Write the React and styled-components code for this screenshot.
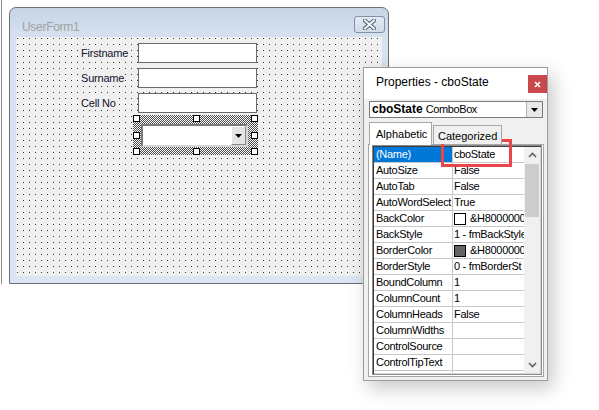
import React from "react";
import styled, { createGlobalStyle } from "styled-components";

const GlobalStyle = createGlobalStyle`
  html, body {
    margin: 0;
    padding: 0;
    background: #fff;
  }
  body {
    font-family: "Liberation Sans", Tahoma, Arial, sans-serif;
  }
`;

const fields = ["Firstname", "Surname", "Cell No"];

const properties = [
  { name: "(Name)", value: "cboState", selected: true },
  { name: "AutoSize", value: "False" },
  { name: "AutoTab", value: "False" },
  { name: "AutoWordSelect", value: "True" },
  { name: "BackColor", value: "&H8000000", swatch: "#ffffff" },
  { name: "BackStyle", value: "1 - fmBackStyle" },
  { name: "BorderColor", value: "&H8000000", swatch: "#646464" },
  { name: "BorderStyle", value: "0 - fmBorderSt" },
  { name: "BoundColumn", value: "1" },
  { name: "ColumnCount", value: "1" },
  { name: "ColumnHeads", value: "False" },
  { name: "ColumnWidths", value: "" },
  { name: "ControlSource", value: "" },
  { name: "ControlTipText", value: "" },
  { name: "", value: "" },
];

const handles = [
  [0, 0], [60, 0], [118, 0],
  [0, 17], [118, 17],
  [0, 33], [60, 33], [118, 33],
];

const App = () => {
  return (
    <>
      <GlobalStyle />
      <Desktop>
        <EdgeLine />

        <FormWindow>
          <FormTitleBar>
            <FormTitle>UserForm1</FormTitle>
            <FormClose>
              <svg width="13" height="11" viewBox="0 0 13 11">
                <path d="M2 1.5 L11 9.5 M11 1.5 L2 9.5" stroke="#55606c" strokeWidth="4" strokeLinecap="square" />
                <path d="M2 1.5 L11 9.5 M11 1.5 L2 9.5" stroke="#f2f5f8" strokeWidth="2" strokeLinecap="square" />
              </svg>
            </FormClose>
          </FormTitleBar>
          <FormClient>
            <FieldList>
              {fields.map((f) => (
                <FieldRow key={f}>
                  <FieldLabel>{f}</FieldLabel>
                  <TextBox />
                </FieldRow>
              ))}
            </FieldList>
            <Selection>
              <FormCombo>
                <ComboButton>
                  <svg width="7" height="4" viewBox="0 0 7 4">
                    <polygon points="0,0 7,0 3.5,4" fill="#000" />
                  </svg>
                </ComboButton>
              </FormCombo>
              {handles.map(([x, y], i) => (
                <Handle key={i} style={{ left: x, top: y }} />
              ))}
            </Selection>
          </FormClient>
        </FormWindow>

        <PropsWindow>
          <PropsTitleBar>
            <PropsTitle>Properties - cboState</PropsTitle>
            <RedClose>
              <svg width="7" height="7" viewBox="0 0 7 7">
                <path d="M1 1 L6 6 M6 1 L1 6" stroke="#fff" strokeWidth="1.6" />
              </svg>
            </RedClose>
          </PropsTitleBar>
          <PropsBody>
            <ObjectCombo>
              <ObjectText>
                <b>cboState</b> <span>ComboBox</span>
              </ObjectText>
              <ObjectButton>
                <svg width="7" height="4" viewBox="0 0 7 4">
                  <polygon points="0,0 7,0 3.5,4" fill="#000" />
                </svg>
              </ObjectButton>
            </ObjectCombo>
            <TabRow>
              <Tab $active>Alphabetic</Tab>
              <Tab>Categorized</Tab>
            </TabRow>
            <TabPage>
              <PropGrid>
                <Rows>
                  {properties.map((p, i) => (
                    <Row key={i}>
                      <NameCell $selected={p.selected}>{p.name}</NameCell>
                      <ValueCell>
                        {p.swatch && <Swatch $color={p.swatch} />}
                        {p.value}
                      </ValueCell>
                    </Row>
                  ))}
                </Rows>
                <ScrollBar>
                  <ScrollArrow>
                    <svg width="9" height="6" viewBox="0 0 9 6">
                      <polyline points="1,5 4.5,1.5 8,5" fill="none" stroke="#606060" strokeWidth="1.6" />
                    </svg>
                  </ScrollArrow>
                  <Thumb />
                  <ScrollTrack />
                  <ScrollArrow>
                    <svg width="9" height="6" viewBox="0 0 9 6">
                      <polyline points="1,1 4.5,4.5 8,1" fill="none" stroke="#606060" strokeWidth="1.6" />
                    </svg>
                  </ScrollArrow>
                </ScrollBar>
              </PropGrid>
            </TabPage>
          </PropsBody>
          <Highlight />
        </PropsWindow>
      </Desktop>
    </>
  );
};

export default App;

const Desktop = styled.div`
  position: relative;
  width: 599px;
  height: 410px;
  overflow: hidden;
  background: #fff;
`;

const EdgeLine = styled.div`
  position: absolute;
  left: 1px;
  top: 0;
  width: 1px;
  height: 284px;
  background: #8c8c8c;
`;

/* ---------- UserForm designer window ---------- */

const FormWindow = styled.div`
  position: absolute;
  left: 9px;
  top: 7px;
  width: 380px;
  height: 277px;
  box-sizing: border-box;
  border: 1px solid #6f6f6f;
  border-radius: 7px 7px 0 0;
  background: linear-gradient(#c6d4e4 0px, #d6e2ef 29px, #dbe6f3 100%);
  padding: 0 6px 7px 6px;
  display: flex;
  flex-direction: column;
`;

const FormTitleBar = styled.div`
  flex: none;
  height: 29px;
  display: flex;
  justify-content: space-between;
  align-items: flex-start;
`;

const FormTitle = styled.div`
  margin: 12px 0 0 6px;
  font-size: 12px;
  line-height: 15px;
  letter-spacing: -0.3px;
  color: #a2a2a2;
`;

const FormClose = styled.div`
  margin: 8px -3px 0 0;
  width: 31px;
  height: 17px;
  box-sizing: border-box;
  border: 1px solid #8293a8;
  border-radius: 3px;
  background: linear-gradient(#e3ebf4, #cfdbe8);
  display: flex;
  align-items: center;
  justify-content: center;
`;

const FormClient = styled.div`
  flex: 1;
  min-height: 0;
  background-color: #f0f0f0;
  background-image: linear-gradient(to right, #f0f0f0 5px, transparent 5px),
    linear-gradient(to bottom, #f0f0f0 5px, #333 5px);
  background-size: 6px 6px;
  background-position: -4px -4px;
  padding: 6px 0 0 65px;
`;

const FieldList = styled.div`
  display: flex;
  flex-direction: column;
  gap: 5px;
`;

const FieldRow = styled.div`
  display: grid;
  grid-template-columns: 57px 119px;
  height: 20px;
  align-items: center;
`;

const FieldLabel = styled.span`
  font-size: 11px;
  letter-spacing: -0.2px;
  color: #101030;
  line-height: 14px;
  justify-self: start;
  background: #f0f0f0;
`;

const TextBox = styled.div`
  height: 20px;
  box-sizing: border-box;
  background: #fff;
  border: 1px solid #6a6a6a;
`;

const Selection = styled.div`
  position: relative;
  margin: 2px 0 0 52px;
  width: 125px;
  height: 40px;
  box-sizing: border-box;
  padding: 9px 10px 8px 8px;
  background: repeating-conic-gradient(#4a4a4a 0 25%, #ffffff 0 50%) 0 0 / 2px 2px;
`;

const FormCombo = styled.div`
  height: 23px;
  box-sizing: border-box;
  background: #fff;
  border: 2px solid;
  border-color: #7a7a7a #d6d6d6 #d6d6d6 #7a7a7a;
  display: flex;
  justify-content: flex-end;
`;

const ComboButton = styled.div`
  width: 15px;
  box-sizing: border-box;
  background: #e4e4e4;
  border: 1px solid;
  border-color: #ffffff #8a8a8a #8a8a8a #ffffff;
  display: flex;
  align-items: center;
  justify-content: center;
`;

const Handle = styled.div`
  position: absolute;
  width: 7px;
  height: 7px;
  box-sizing: border-box;
  background: #fff;
  border: 1px solid #000;
`;

/* ---------- Properties window ---------- */

const PropsWindow = styled.div`
  position: absolute;
  left: 363px;
  top: 67px;
  width: 185px;
  height: 314px;
  box-sizing: border-box;
  border: 1px solid #9c9c9c;
  background: #f0f0f0;
  box-shadow: 5px 7px 18px rgba(0, 0, 0, 0.22);
  display: flex;
  flex-direction: column;
`;

const PropsTitleBar = styled.div`
  flex: none;
  height: 31px;
  background: #fff;
  display: flex;
  justify-content: space-between;
  align-items: flex-start;
`;

const PropsTitle = styled.div`
  margin: 7px 0 0 12px;
  font-size: 12px;
  line-height: 15px;
  color: #000;
`;

const RedClose = styled.div`
  margin-top: 7px;
  width: 19px;
  height: 18px;
  background: #c9484b;
  display: flex;
  align-items: center;
  justify-content: center;
`;

const PropsBody = styled.div`
  flex: 1;
  min-height: 0;
  display: flex;
  flex-direction: column;
  padding: 2px 4px 3px 5px;
`;

const ObjectCombo = styled.div`
  flex: none;
  height: 17px;
  box-sizing: border-box;
  background: #fff;
  border: 1px solid #7a7a7a;
  display: flex;
  align-items: stretch;
`;

const ObjectText = styled.div`
  flex: 1;
  padding-left: 2px;
  font-size: 11px;
  line-height: 15px;
  white-space: nowrap;
  overflow: hidden;
  b {
    font-size: 12px;
    font-weight: 700;
  }
  span {
    letter-spacing: -0.4px;
  }
`;

const ObjectButton = styled.div`
  width: 16px;
  box-sizing: border-box;
  background: #e8e8e8;
  border-left: 1px solid #b4b4b4;
  display: flex;
  align-items: center;
  justify-content: center;
`;

const TabRow = styled.div`
  flex: none;
  margin: 4px 0 -1px 0;
  height: 23px;
  display: flex;
  align-items: flex-end;
  position: relative;
  z-index: 1;
`;

const Tab = styled.div`
  box-sizing: border-box;
  height: ${(p) => (p.$active ? "23px" : "19px")};
  width: ${(p) => (p.$active ? "63px" : "69px")};
  padding: ${(p) => (p.$active ? "4px 0 0 6px" : "3px 0 0 4px")};
  margin-left: ${(p) => (p.$active ? "0" : "1px")};
  margin-bottom: ${(p) => (p.$active ? "0" : "1px")};
  background: ${(p) => (p.$active ? "#fff" : "#f0f0f0")};
  border: 1px solid #a6a6a6;
  border-bottom: none;
  font-size: 11px;
  line-height: 14px;
  color: #000;
  white-space: nowrap;
`;

const TabPage = styled.div`
  flex: 1;
  min-height: 0;
  margin: 0 -1px 0 -1px;
  box-sizing: border-box;
  background: #fff;
  border: 1px solid #a6a6a6;
  padding: 0 1px 1px 3px;
  display: flex;
  flex-direction: column;
`;

const PropGrid = styled.div`
  flex: 1;
  min-height: 0;
  box-sizing: border-box;
  border: 1px solid #8c8c8c;
  box-shadow: inset 1px 1px 0 #3c3c3c, inset -1px -1px 0 #d4d4d4;
  padding: 1px;
  display: flex;
  overflow: hidden;
`;

const Rows = styled.div`
  flex: 1;
  min-width: 0;
  overflow: hidden;
`;

const Row = styled.div`
  display: grid;
  grid-template-columns: 79px 1fr;
  height: 16px;
  box-sizing: border-box;
  border-bottom: 1px solid #c8c8c8;
  font-size: 11px;
  letter-spacing: -0.3px;
  line-height: 15px;
  color: #000;
`;

const NameCell = styled.div`
  box-sizing: border-box;
  padding-left: 2px;
  border-right: 1px solid #c8c8c8;
  white-space: nowrap;
  overflow: hidden;
  background: ${(p) => (p.$selected ? "#0078d7" : "#fff")};
  color: ${(p) => (p.$selected ? "#fff" : "#000")};
`;

const ValueCell = styled.div`
  padding-left: 1px;
  display: flex;
  align-items: center;
  gap: 4px;
  white-space: nowrap;
  overflow: hidden;
`;

const Swatch = styled.span`
  flex: none;
  width: 12px;
  height: 12px;
  box-sizing: border-box;
  border: 1px solid #000;
  background: ${(p) => p.$color};
`;

const ScrollBar = styled.div`
  width: 16px;
  flex: none;
  background: #f0f0f0;
  display: flex;
  flex-direction: column;
`;

const ScrollArrow = styled.div`
  flex: none;
  height: 16px;
  display: flex;
  align-items: center;
  justify-content: center;
`;

const Thumb = styled.div`
  flex: none;
  height: 53px;
  margin: 1px 1px 0 1px;
  background: #cdcdcd;
`;

const ScrollTrack = styled.div`
  flex: 1;
`;

const Highlight = styled.div`
  position: absolute;
  left: 77px;
  top: 71px;
  width: 71px;
  height: 28px;
  box-sizing: border-box;
  border: 3px solid #e8464a;
`;
